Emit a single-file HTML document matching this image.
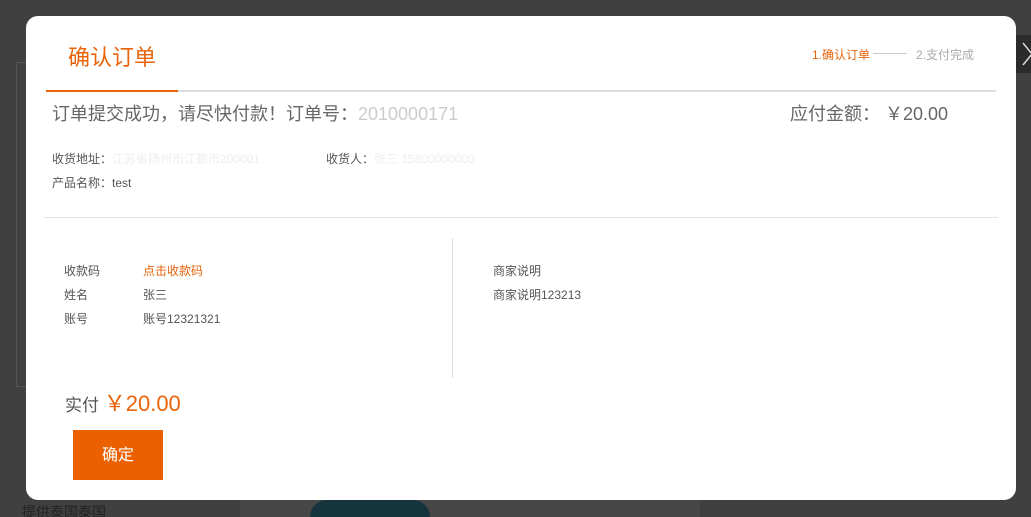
<!DOCTYPE html>
<html><head><meta charset="utf-8"><style>
*{margin:0;padding:0;box-sizing:border-box}
html,body{width:1031px;height:517px;overflow:hidden}
body{background:#404040;font-family:"Liberation Sans","Noto Sans CJK SC",sans-serif;position:relative}
.abs{position:absolute}
.modal{left:26px;top:16px;width:990px;height:484px;background:#fff;border-radius:12px}
.t{position:absolute;white-space:nowrap}
</style></head><body>
<div class="abs" style="left:16px;top:62px;width:10px;height:325px;border:1px solid #555;border-right:none"></div>
<div class="abs" style="left:1016px;top:35px;width:15px;height:38px;background:#2b2b2b"></div>
<svg class="abs" style="left:1022px;top:42px" width="10" height="24"><path d="M1 1 L10 12 L1 23" stroke="#ddd" stroke-width="1.5" fill="none"/></svg>
<div class="abs" style="left:240px;top:500px;width:460px;height:17px;background:#474747"></div>
<div class="abs" style="left:310px;top:500px;width:120px;height:17px;border-radius:60px 60px 0 0;background:#15343e"></div>
<div class="t" style="left:22px;top:502px;color:#222;font-size:14px">提供泰国泰国</div>
<div class="abs modal">
  <div class="t" style="left:42px;top:24px;font-size:22px;color:#e8630a">确认订单</div>
  <div class="t" style="left:786px;top:30px;font-size:12px;color:#e8630a">1.确认订单</div>
  <div class="abs" style="left:847px;top:37px;width:34px;height:1px;background:#ccc"></div>
  <div class="t" style="left:890px;top:30px;font-size:12px;color:#aaa">2.支付完成</div>
  <div class="abs" style="left:20px;top:74px;width:950px;height:2px;background:#ddd"></div>
  <div class="abs" style="left:20px;top:74px;width:132px;height:2px;background:#e8630a"></div>
  <div class="t" style="left:26px;top:84px;font-size:18px;color:#666">订单提交成功，请尽快付款！订单号：<span style="color:#ccc">2010000171</span></div>
  <div class="t" style="left:764px;top:84px;font-size:18px;color:#666">应付金额： ￥20.00</div>
  <div class="t" style="left:26px;top:134px;font-size:12px;color:#555">收货地址：<span style="color:#eee">江苏省扬州市江都市200001</span></div>
  <div class="t" style="left:300px;top:134px;font-size:12px;color:#555">收货人：<span style="color:#eee">张三 15800000000</span></div>
  <div class="t" style="left:26px;top:158px;font-size:12px;color:#555">产品名称：test</div>
  <div class="abs" style="left:18px;top:201px;width:954px;height:1px;background:#e2e2e2"></div>
  <div class="abs" style="left:426px;top:222px;width:1px;height:140px;background:#ddd"></div>
  <div class="t" style="left:38px;top:243px;font-size:12px;color:#555;line-height:24px">收款码<br>姓名<br>账号</div>
  <div class="t" style="left:117px;top:243px;font-size:12px;color:#555;line-height:24px"><span style="color:#e8630a">点击收款码</span><br>张三<br>账号12321321</div>
  <div class="t" style="left:467px;top:243px;font-size:12px;color:#555;line-height:24px">商家说明<br>商家说明123213</div>
  <div class="t" style="left:39px;top:370px;font-size:17px;color:#555">实付 <span style="color:#e8630a;font-size:22px">￥20.00</span></div>
  <div class="abs" style="left:47px;top:414px;width:90px;height:50px;background:#eb6100;color:#fff;font-size:16px;text-align:center;line-height:52px">确定</div>
</div>
</body></html>
